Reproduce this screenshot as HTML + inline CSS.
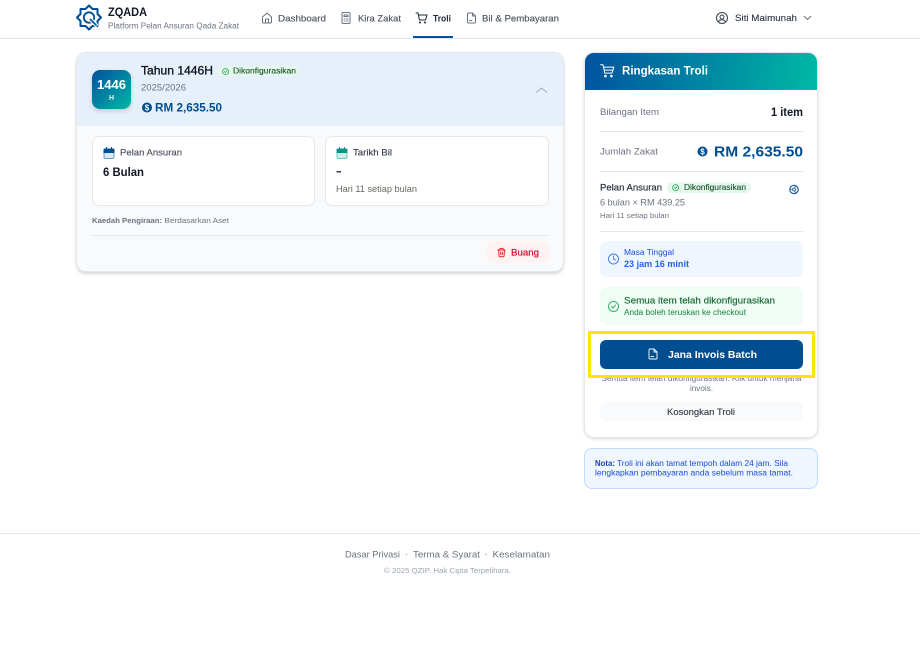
<!DOCTYPE html>
<html lang="ms"><head><meta charset="utf-8"><title>ZQADA Troli</title>
<style>
html,body{margin:0;padding:0;background:#fff;width:920px;height:650px;overflow:hidden}
.b{position:absolute;box-sizing:border-box}
svg{position:absolute;left:0;top:0;filter:blur(.3px)}
text{font-family:"Liberation Sans",sans-serif;white-space:pre}
.m{stroke:currentColor;stroke-width:.1px}
.i{fill:none;stroke-linecap:round;stroke-linejoin:round;stroke-width:2}
</style></head><body>
<div class="b" style="left:0;top:38px;width:920px;height:1px;background:#e5e7eb"></div>
<div class="b" style="left:413px;top:36px;width:40px;height:2px;background:#00529b"></div>

<div class="b" style="left:76px;top:52px;width:488px;height:220px;background:#f9fafb;border:1px solid #e5e7eb;border-radius:10px;box-shadow:0 2px 3px rgba(0,0,0,.16);overflow:hidden">
 <div class="b" style="left:0;top:0;width:486px;height:73px;background:#e6f0fa"></div>
</div>
<div class="b" style="left:92px;top:70px;width:39px;height:39px;border-radius:8px;background:linear-gradient(135deg,#00509f,#00b8a6);box-shadow:0 2px 5px rgba(0,0,0,.16)"></div>
<div class="b" style="left:218px;top:66px;width:81px;height:10px;border-radius:5px;background:#e6f8ec"></div>
<div class="b" style="left:92px;top:136px;width:223px;height:70px;background:#fff;border:1px solid #e5e7eb;border-radius:7px"></div>
<div class="b" style="left:325px;top:136px;width:224px;height:70px;background:#fff;border:1px solid #e5e7eb;border-radius:7px"></div>
<div class="b" style="left:92px;top:235px;width:457px;height:1px;background:#e5e7eb"></div>
<div class="b" style="left:486px;top:241px;width:63px;height:22px;border-radius:8px;background:#fef2f2"></div>

<div class="b" style="left:584px;top:52px;width:234px;height:386px;background:#fff;border:1px solid #e5e7eb;border-radius:10px;box-shadow:0 1px 3px rgba(0,0,0,.14);overflow:hidden">
 <div class="b" style="left:0;top:0;width:232px;height:37px;background:linear-gradient(100deg,#00529f,#00b9a5)"></div>
</div>
<div class="b" style="left:600px;top:131px;width:203px;height:1px;background:#e5e7eb"></div>
<div class="b" style="left:600px;top:171px;width:203px;height:1px;background:#e5e7eb"></div>
<div class="b" style="left:600px;top:231px;width:203px;height:1px;background:#e5e7eb"></div>
<div class="b" style="left:667px;top:182px;width:84px;height:11px;border-radius:5px;background:#e6f8ec"></div>
<div class="b" style="left:600px;top:241px;width:203px;height:36px;border-radius:7px;background:#eff6ff"></div>
<div class="b" style="left:600px;top:287px;width:203px;height:38px;border-radius:7px;background:#f0fdf4"></div>
<div class="b" style="left:600px;top:401px;width:203px;height:21px;border-radius:8px;background:#f9fafb"></div>
<div class="b" style="left:584px;top:448px;width:234px;height:41px;border-radius:8px;background:#eff6ff;border:1px solid #bfdbfe"></div>
<div class="b" style="left:0;top:533px;width:920px;height:1px;background:#e5e7eb"></div>

<svg width="920" height="650" viewBox="0 0 920 650" xmlns="http://www.w3.org/2000/svg">
<!-- logo -->
<g transform="translate(89 17.5)" fill="none" stroke="#004e92" stroke-linejoin="round">
 <polygon stroke-width="2" points="0,-12 3.5,-8.5 8.5,-8.5 8.5,-3.5 12,0 8.5,3.5 8.5,8.5 3.5,8.5 0,12 -3.5,8.5 -8.5,8.5 -8.5,3.5 -12,0 -8.5,-3.5 -8.5,-8.5 -3.5,-8.5"/>
 <circle r="5.2" stroke-width="1.8"/>
 <path d="M1.5 2 L8 8.5" stroke="#fff" stroke-width="4"/>
 <path d="M1 1.5 L7.5 8" stroke="#00639f" stroke-width="1.9"/>
</g>
<text x="108" y="16" font-size="11.5" font-weight="700" fill="#111827" textLength="39" lengthAdjust="spacingAndGlyphs">ZQADA</text>
<text x="108" y="28.5" font-size="8" fill="#6b7280" textLength="131" lengthAdjust="spacingAndGlyphs">Platform Pelan Ansuran Qada Zakat</text>

<!-- nav -->
<g transform="translate(261 12) scale(.5)" class="i" stroke="#6b7280"><path d="M3 10l9-8 9 8v10a2 2 0 0 1-2 2H5a2 2 0 0 1-2-2z"/><path d="M9 22v-8h6v8"/></g>
<text x="278" y="21.5" font-size="9.5" fill="#555e6c" class="m" textLength="48" lengthAdjust="spacingAndGlyphs">Dashboard</text>
<g transform="translate(340 12) scale(.5)" class="i" stroke="#6b7280"><rect x="4" y="1" width="16" height="22" rx="2"/><path d="M8 6h8v3H8zM8 14h1M12 14h1M15 14h1M8 18h1M12 18h1M15 18h1"/></g>
<text x="358" y="21.5" font-size="9.5" fill="#555e6c" class="m" textLength="43" lengthAdjust="spacingAndGlyphs">Kira Zakat</text>
<g transform="translate(415.5 12) scale(.5)" class="i" stroke="#1f2937"><path d="M1 2h4l3 14h12l3-10H6"/><circle cx="9" cy="21" r="1"/><circle cx="19" cy="21" r="1"/></g>
<text x="433" y="21.5" font-size="9.5" font-weight="700" fill="#1f2937" textLength="18" lengthAdjust="spacingAndGlyphs">Troli</text>
<g transform="translate(465.5 12) scale(.5)" class="i" stroke="#6b7280"><path d="M14 2H6a2 2 0 0 0-2 2v16a2 2 0 0 0 2 2h12a2 2 0 0 0 2-2V8z"/><path d="M14 2v6h6M8 17h5"/></g>
<text x="482" y="21.5" font-size="9.5" fill="#555e6c" class="m" textLength="77" lengthAdjust="spacingAndGlyphs">Bil &amp; Pembayaran</text>
<g transform="translate(716 12) scale(.5)" class="i" stroke="#374151"><circle cx="12" cy="12" r="11"/><circle cx="12" cy="10" r="4"/><path d="M5 20c1-3 4-4.5 7-4.5s6 1.5 7 4.5"/></g>
<text x="735" y="21" font-size="9.5" fill="#374151" class="m" textLength="62" lengthAdjust="spacingAndGlyphs">Siti Maimunah</text>
<path d="M804 16l3.500 3.500L811 16" fill="none" stroke="#6b7280" stroke-width="1"/>

<!-- item card -->
<text x="111.5" y="89" text-anchor="middle" font-size="13" font-weight="700" fill="#fff" textLength="29" lengthAdjust="spacingAndGlyphs">1446</text>
<text x="111.5" y="100" text-anchor="middle" font-size="7" font-weight="700" fill="#e6fffb">H</text>
<text x="141" y="74.5" font-size="12" fill="#111827" class="m" style="stroke-width:.3px" textLength="72" lengthAdjust="spacingAndGlyphs">Tahun 1446H</text>
<g transform="translate(222 68) scale(.3)" class="i" stroke="#16a34a" style="stroke-width:2.500"><circle cx="12" cy="12" r="10"/><path d="M8 12l3 3 5-6"/></g>
<text x="233" y="73.500" font-size="8" fill="#166534" class="m" textLength="63" lengthAdjust="spacingAndGlyphs">Dikonfigurasikan</text>
<text x="141" y="90.5" font-size="9" fill="#6b7280" textLength="45" lengthAdjust="spacingAndGlyphs">2025/2026</text>
<circle cx="147" cy="107.5" r="5" fill="#004e92"/><text x="147" y="110.5" text-anchor="middle" font-size="8" font-weight="700" fill="#fff">$</text>
<text x="155" y="111.500" font-size="12" font-weight="700" fill="#004e92" textLength="67" lengthAdjust="spacingAndGlyphs">RM 2,635.50</text>
<path d="M536 92.500l5.500-4.500 5.500 4.500" fill="none" stroke="#a5acb8" stroke-width="1"/>

<g>
 <rect x="104" y="149" width="10" height="9.5" rx="1.5" fill="#dbe7f5" stroke="#6f98c4" stroke-width="1"/>
 <path d="M103.5 153v-3a1.500 1.500 0 0 1 1.500-1.500h8a1.500 1.500 0 0 1 1.500 1.500v3z" fill="#004e92"/>
 <path d="M106.500 147v2M111.500 147v2" stroke="#004e92"/>
</g>
<text x="120" y="155.5" font-size="9" fill="#555e6c" class="m" textLength="62" lengthAdjust="spacingAndGlyphs">Pelan Ansuran</text>
<text x="103" y="176" font-size="11.5" font-weight="700" fill="#111827" textLength="41" lengthAdjust="spacingAndGlyphs">6 Bulan</text>
<g>
 <rect x="337" y="149" width="10" height="9.5" rx="1.5" fill="#cdeee9" stroke="#75c7bd" stroke-width="1"/>
 <path d="M336.500 153v-3a1.500 1.500 0 0 1 1.500-1.500h8a1.500 1.500 0 0 1 1.500 1.500v3z" fill="#0d9488"/>
 <path d="M339.500 147v2M344.500 147v2" stroke="#0d9488"/>
</g>
<text x="353" y="155.5" font-size="9" fill="#374151" class="m" textLength="39" lengthAdjust="spacingAndGlyphs">Tarikh Bil</text>
<rect x="336.5" y="171" width="4.500" height="1.500" fill="#374151"/>
<text x="336" y="192" font-size="9" fill="#6b6660" textLength="81" lengthAdjust="spacingAndGlyphs">Hari 11 setiap bulan</text>
<text x="92" y="223" font-size="7.5" font-weight="700" fill="#6b7280" textLength="70" lengthAdjust="spacingAndGlyphs">Kaedah Pengiraan:</text>
<text x="164.5" y="223" font-size="7.5" fill="#6b7280" textLength="64.5" lengthAdjust="spacingAndGlyphs">Berdasarkan Aset</text>
<g transform="translate(496.5 247.5) scale(.42)" class="i" stroke="#dc2626" style="stroke-width:2.300"><path d="M3 6h18M8 6V4a2 2 0 0 1 2-2h4a2 2 0 0 1 2 2v2M19 6l-1 14a2 2 0 0 1-2 2H8a2 2 0 0 1-2-2L5 6M10 11v6M14 11v6"/></g>
<text x="511" y="255.5" font-size="9.5" fill="#c8102e" style="stroke:#c8102e;stroke-width:.2px" textLength="28" lengthAdjust="spacingAndGlyphs">Buang</text>

<!-- summary -->
<g transform="translate(600 63.5) scale(.6)" class="i" stroke="#fff" style="stroke-width:1.700"><path d="M1 2h4l3 14h12l3-10H6"/><path d="M8 11h13"/><circle cx="9" cy="21" r="1.300"/><circle cx="19" cy="21" r="1.300"/></g>
<text x="622" y="74.5" font-size="11.5" font-weight="700" fill="#fff" textLength="86" lengthAdjust="spacingAndGlyphs">Ringkasan Troli</text>
<text x="600" y="115" font-size="9" fill="#6b7280" textLength="59" lengthAdjust="spacingAndGlyphs">Bilangan Item</text>
<text x="771" y="116" font-size="12" font-weight="700" fill="#111827" textLength="32" lengthAdjust="spacingAndGlyphs">1 item</text>
<text x="600" y="154.5" font-size="9" fill="#6b7280" textLength="58" lengthAdjust="spacingAndGlyphs">Jumlah Zakat</text>
<circle cx="702.5" cy="151.5" r="5" fill="#004e92"/><text x="702.5" y="154.5" text-anchor="middle" font-size="8" font-weight="700" fill="#fff">$</text>
<text x="714" y="156.5" font-size="14.5" font-weight="700" fill="#004e92" textLength="89" lengthAdjust="spacingAndGlyphs">RM 2,635.50</text>

<text x="600" y="190.5" font-size="9" fill="#1f2937" style="stroke:#1f2937;stroke-width:.15px" textLength="62" lengthAdjust="spacingAndGlyphs">Pelan Ansuran</text>
<g transform="translate(672 184) scale(.3)" class="i" stroke="#16a34a" style="stroke-width:2.500"><circle cx="12" cy="12" r="10"/><path d="M8 12l3 3 5-6"/></g>
<text x="684" y="190" font-size="8" fill="#166534" class="m" textLength="62" lengthAdjust="spacingAndGlyphs">Dikonfigurasikan</text>
<g fill="none" stroke="#1f6199"><circle cx="794" cy="189.5" r="4.200" stroke-width="1.200"/><circle cx="794" cy="189.5" r="1.400" stroke-width=".9"/><path d="M795.500 185.500l-.8 2.700M789.800 189.500h2.800M795.500 193.500l-.8-2.700" stroke-width=".8"/></g>
<text x="600" y="205.5" font-size="9" fill="#6b7280" textLength="85" lengthAdjust="spacingAndGlyphs">6 bulan × RM 439.25</text>
<text x="600" y="218" font-size="7.5" fill="#6b7280" textLength="69" lengthAdjust="spacingAndGlyphs">Hari 11 setiap bulan</text>

<g transform="translate(607.5 253) scale(.5)" class="i" stroke="#4f80e8"><circle cx="12" cy="12" r="10"/><path d="M12 6v6l4 2"/></g>
<text x="624" y="255" font-size="8" fill="#1d4ed8" textLength="50" lengthAdjust="spacingAndGlyphs">Masa Tinggal</text>
<text x="624" y="267" font-size="9.5" font-weight="700" fill="#2563eb" textLength="65" lengthAdjust="spacingAndGlyphs">23 jam 16 minit</text>
<g transform="translate(607.5 300.5) scale(.5)" class="i" stroke="#34b36a"><circle cx="12" cy="12" r="10"/><path d="M8 12l3 3 5-6"/></g>
<text x="624" y="303.5" font-size="9.5" fill="#166534" style="stroke:#166534;stroke-width:.15px" textLength="151" lengthAdjust="spacingAndGlyphs">Semua item telah dikonfigurasikan</text>
<text x="624" y="315" font-size="8" fill="#15803d" textLength="122" lengthAdjust="spacingAndGlyphs">Anda boleh teruskan ke checkout</text>

<text x="701.5" y="381" text-anchor="middle" font-size="8" fill="#6b7280" textLength="200" lengthAdjust="spacingAndGlyphs">Semua item telah dikonfigurasikan. Klik untuk menjana</text>
<text x="701.5" y="391" text-anchor="middle" font-size="8" fill="#6b7280" textLength="23" lengthAdjust="spacingAndGlyphs">invois.</text>
<rect x="589.5" y="332.5" width="224" height="44" fill="none" stroke="#ffe600" stroke-width="3"/>
<rect x="600" y="340" width="203" height="29" rx="6" fill="#004e92"/>
<g transform="translate(647 348) scale(.5)" class="i" stroke="#fff" style="stroke-width:1.800"><path d="M14 2H6a2 2 0 0 0-2 2v16a2 2 0 0 0 2 2h12a2 2 0 0 0 2-2V8z"/><path d="M14 2v6h6M8 17h5"/></g>
<text x="668" y="358" font-size="10.5" font-weight="700" fill="#fff" textLength="89" lengthAdjust="spacingAndGlyphs">Jana Invois Batch</text>
<text x="667" y="415" font-size="9.5" fill="#374151" class="m" textLength="68" lengthAdjust="spacingAndGlyphs">Kosongkan Troli</text>

<text x="595" y="466" font-size="8" font-weight="700" fill="#1e40af" textLength="20" lengthAdjust="spacingAndGlyphs">Nota:</text>
<text x="617" y="466" font-size="8" fill="#1d4ed8" textLength="171" lengthAdjust="spacingAndGlyphs">Troli ini akan tamat tempoh dalam 24 jam. Sila</text>
<text x="595" y="475.5" font-size="8" fill="#1d4ed8" textLength="198" lengthAdjust="spacingAndGlyphs">lengkapkan pembayaran anda sebelum masa tamat.</text>

<!-- footer -->
<text x="345" y="557.5" font-size="9.5" fill="#6b7280" textLength="55" lengthAdjust="spacingAndGlyphs">Dasar Privasi</text>
<circle cx="406.5" cy="554.5" r="1" fill="#cbd0d8"/>
<text x="413" y="557.5" font-size="9.5" fill="#6b7280" textLength="67" lengthAdjust="spacingAndGlyphs">Terma &amp; Syarat</text>
<circle cx="486" cy="554.5" r="1" fill="#cbd0d8"/>
<text x="492.5" y="557.5" font-size="9.5" fill="#6b7280" textLength="57.5" lengthAdjust="spacingAndGlyphs">Keselamatan</text>
<text x="384" y="573" font-size="7.5" fill="#9ca3af" textLength="127" lengthAdjust="spacingAndGlyphs">© 2025 QZIP. Hak Cipta Terpelihara.</text>
</svg>
</body></html>
